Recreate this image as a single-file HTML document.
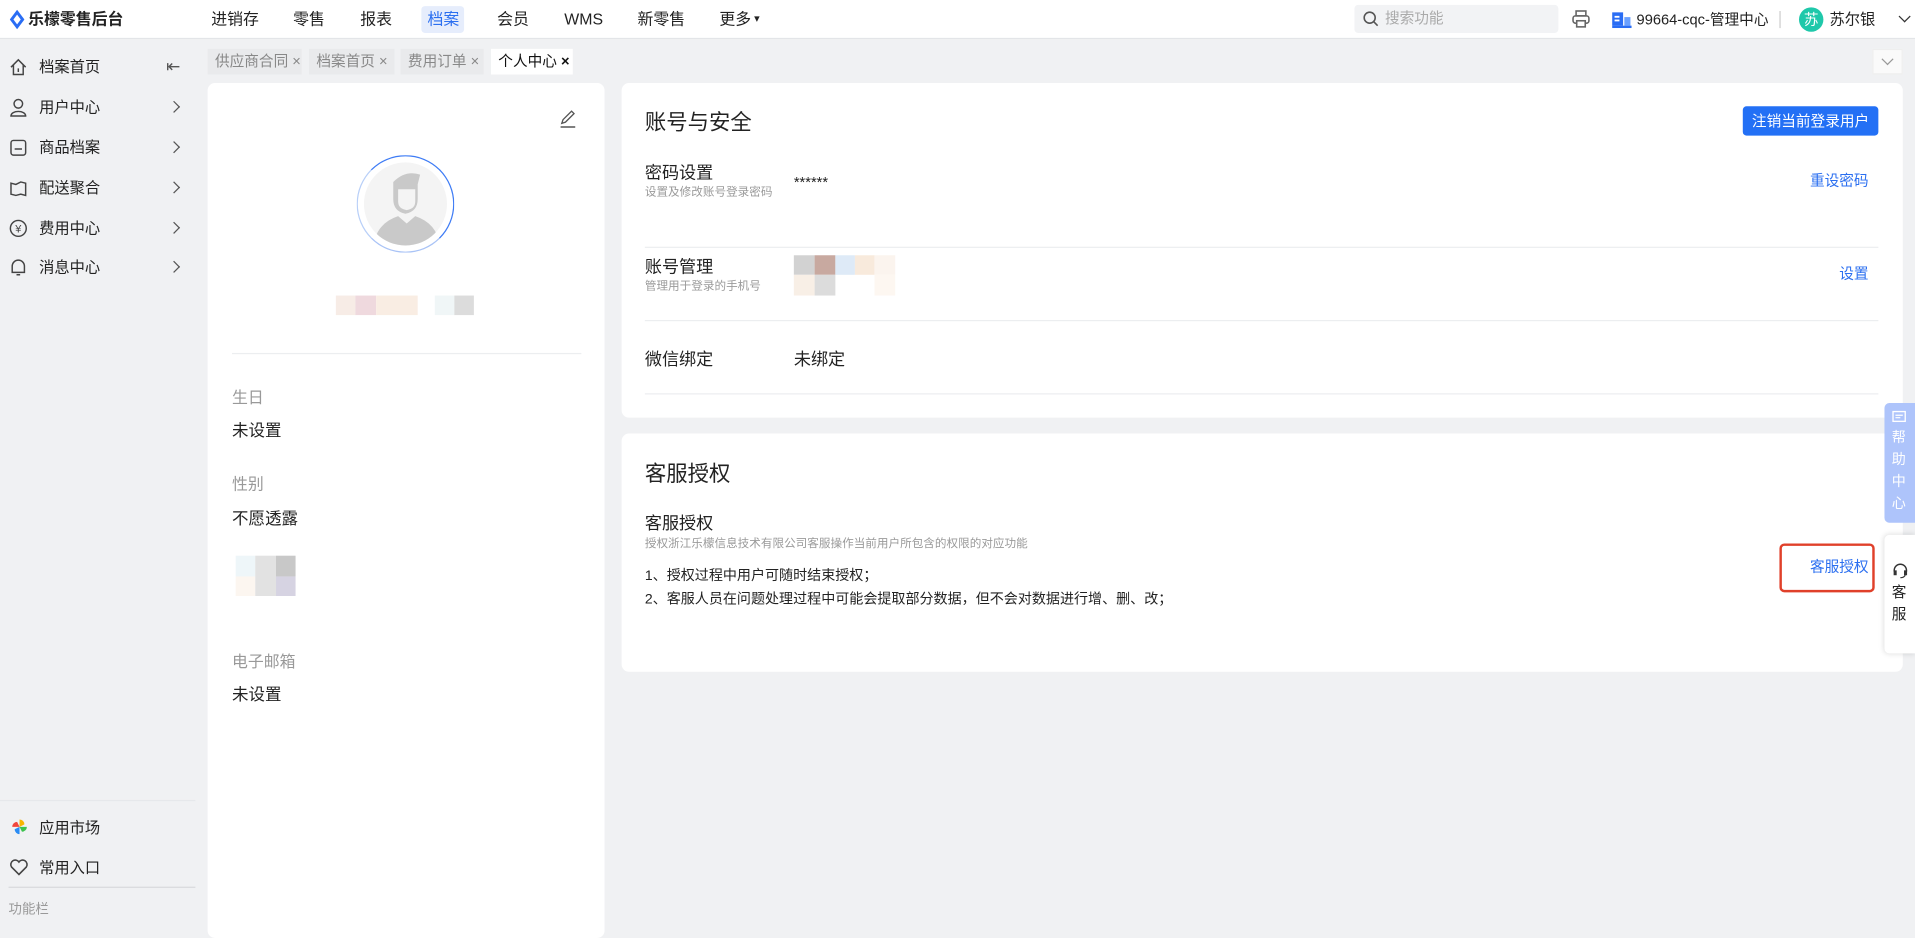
<!DOCTYPE html>
<html><head><meta charset="utf-8"><style>
html,body{margin:0;padding:0;width:1915px;height:929px;overflow:hidden;background:#f0f1f3}
#w{position:absolute;left:0;top:0;width:1568px;height:761px;transform:scale(1.22130);transform-origin:0 0;font-family:"Liberation Sans","Noto Sans CJK SC",sans-serif;color:#222;background:#f0f1f3;line-height:1.15}
.a{position:absolute;white-space:nowrap}
.top{position:absolute;left:0;top:0;width:1568px;height:31px;background:#fff;border-bottom:1px solid #e3e5e8}
.nav{font-size:13px;top:9px;color:#222}
.side{font-size:12.5px;color:#222}
.chev{position:absolute;width:6px;height:6px;border-right:1.3px solid #555;border-top:1.3px solid #555;transform:rotate(45deg)}
.tab{position:absolute;top:40px;height:21px;background:#e9eaec;font-size:12px;color:#888;line-height:21px;padding-left:6px;box-sizing:border-box;white-space:nowrap}
.card{position:absolute;background:#fff;border-radius:6px}
.lbl{font-size:13px;color:#999}
.val{font-size:13.5px;color:#222}
.t14{font-size:14px;color:#222}
.sub{font-size:9.5px;color:#9a9a9a}
.link{font-size:12px;color:#2b6ff0}
.hr{position:absolute;height:1px;background:#eceef0}
</style></head><body><div id="w">
<div class="top"></div>
<svg class="a" style="left:8px;top:8px" width="12" height="16" viewBox="0 0 12 16"><path d="M6 0L12 8 6 16 0 8Z" fill="#2a6df4"/><path d="M6 4L9 8 6 12 3 8Z" fill="#fff"/></svg>
<div class="a" style="left:23px;top:9px;font-size:13px;font-weight:bold">乐檬零售后台</div>
<div class="a" style="left:345px;top:5px;width:35px;height:22px;background:#e6edfc;border-radius:3px"></div>
<div class="a nav" style="left:173px">进销存</div>
<div class="a nav" style="left:240px">零售</div>
<div class="a nav" style="left:295px">报表</div>
<div class="a nav" style="left:350px;color:#2b6ff0">档案</div>
<div class="a nav" style="left:407px">会员</div>
<div class="a nav" style="left:462px">WMS</div>
<div class="a nav" style="left:522px">新零售</div>
<div class="a nav" style="left:589px">更多<span style="font-size:9px;vertical-align:2px"> ▾</span></div>
<div class="a" style="left:1109px;top:4px;width:167px;height:23px;background:#f2f3f5;border-radius:3px"></div>
<svg class="a" style="left:1116px;top:9px" width="13" height="13"><circle cx="5.5" cy="5.5" r="4.5" stroke="#555" stroke-width="1.3" fill="none"/><path d="M9 9L12 12" stroke="#555" stroke-width="1.3"/></svg>
<div class="a" style="left:1134px;top:9px;font-size:12px;color:#aaa">搜索功能</div>
<svg class="a" style="left:1287px;top:8px" width="15" height="15"><rect x="3.5" y="1" width="8" height="4" fill="none" stroke="#666" stroke-width="1.3"/><rect x="1" y="5" width="13" height="6" rx="2" fill="none" stroke="#666" stroke-width="1.3"/><rect x="4" y="9" width="7" height="5" fill="#fff" stroke="#666" stroke-width="1.3"/></svg>
<svg class="a" style="left:1320px;top:10px" width="16" height="13"><rect x="0" y="0" width="9" height="11" fill="#2a6df4"/><rect x="10" y="4" width="5" height="7" fill="#6aa0ff"/><rect x="0" y="11" width="16" height="2" fill="#2a6df4"/><rect x="2" y="3" width="4" height="1.5" fill="#fff"/><rect x="2" y="6" width="4" height="1.5" fill="#fff"/></svg>
<div class="a" style="left:1340px;top:10px;font-size:12px">99664-cqc-管理中心</div>
<div class="a" style="left:1457px;top:9px;width:1px;height:14px;background:#ccc"></div>
<div class="a" style="left:1473px;top:6px;width:20px;height:20px;border-radius:50%;background:#1fc8aa;color:#fff;font-size:12px;text-align:center;line-height:20px">苏</div>
<div class="a" style="left:1498px;top:9px;font-size:12.5px">苏尔银</div>
<div class="chev" style="left:1556px;top:10px;transform:rotate(135deg);border-color:#333"></div>

<svg class="a" style="left:7px;top:47px" width="16" height="16"><path d="M2 8L8 2 14 8M4 6V14H12V6M8 9V12" fill="none" stroke="#444" stroke-width="1.2"/></svg>
<div class="a side" style="left:32px;top:48px">档案首页</div>
<div class="a" style="left:136px;top:46px;font-size:14px;color:#555">⇤</div>
<svg class="a" style="left:7px;top:80px" width="16" height="16"><circle cx="8" cy="5" r="3.5" fill="none" stroke="#444" stroke-width="1.2"/><path d="M2 15C2 10 14 10 14 15Z" fill="none" stroke="#444" stroke-width="1.2"/></svg>
<div class="a side" style="left:32px;top:81px">用户中心</div><div class="chev" style="left:139px;top:84px"></div>
<svg class="a" style="left:7px;top:113px" width="16" height="16"><rect x="2" y="2" width="12" height="12" rx="2" fill="none" stroke="#444" stroke-width="1.2"/><path d="M5 9H11" stroke="#444" stroke-width="1.2"/></svg>
<div class="a side" style="left:32px;top:114px">商品档案</div><div class="chev" style="left:139px;top:117px"></div>
<svg class="a" style="left:7px;top:146px" width="16" height="16"><path d="M2 4L6 5 10 3 14 4V14L10 13 6 14 2 13Z" fill="none" stroke="#444" stroke-width="1.2"/></svg>
<div class="a side" style="left:32px;top:147px">配送聚合</div><div class="chev" style="left:139px;top:150px"></div>
<svg class="a" style="left:7px;top:179px" width="16" height="16"><circle cx="8" cy="8" r="6.5" fill="none" stroke="#444" stroke-width="1.2"/><text x="8" y="11.5" font-size="9" text-anchor="middle" fill="#444">¥</text></svg>
<div class="a side" style="left:32px;top:180px">费用中心</div><div class="chev" style="left:139px;top:183px"></div>
<svg class="a" style="left:7px;top:211px" width="16" height="16"><path d="M3 12V7A5 5 0 0 1 13 7V12H3ZM6.5 14H9.5" fill="none" stroke="#444" stroke-width="1.2"/></svg>
<div class="a side" style="left:32px;top:212px">消息中心</div><div class="chev" style="left:139px;top:215px"></div>
<div class="hr" style="left:0;top:655px;width:160px;background:#e6e8eb"></div>
<svg class="a" style="left:9px;top:670px" width="14" height="14"><path d="M7 7V1A4 4 0 0 1 11 5Z" fill="#f7b500"/><path d="M7 7H13A4 4 0 0 1 9 11Z" fill="#3cc24d"/><path d="M7 7V13A4 4 0 0 1 3 9Z" fill="#2a8cf4"/><path d="M7 7H1A4 4 0 0 1 5 3Z" fill="#f0463c"/></svg>
<div class="a side" style="left:32px;top:671px">应用市场</div>
<svg class="a" style="left:8px;top:703px" width="15" height="14"><path d="M7.5 13L1.5 7A3.3 3.3 0 0 1 7.5 2.8 3.3 3.3 0 0 1 13.5 7Z" fill="none" stroke="#444" stroke-width="1.3"/></svg>
<div class="a side" style="left:32px;top:704px">常用入口</div>
<div class="hr" style="left:7px;top:726px;width:153px;background:#d8d9dc"></div>
<div class="a" style="left:7px;top:739px;font-size:11px;color:#999">功能栏</div>

<div class="tab" style="left:170px;width:77px">供应商合同 ×</div>
<div class="tab" style="left:253px;width:70px">档案首页 ×</div>
<div class="tab" style="left:328px;width:68px">费用订单 ×</div>
<div class="tab" style="left:402px;width:67px;background:#fff;color:#111">个人中心 <b>×</b></div>
<div class="a" style="left:1533px;top:40px;width:25px;height:21px;background:#fafafa;border:1px solid #eee;box-sizing:border-box"></div>
<div class="chev" style="left:1542px;top:45px;transform:rotate(135deg);border-color:#999"></div>

<div class="card" style="left:170px;top:68px;width:325px;height:700px"></div>
<svg class="a" style="left:457px;top:89px" width="16" height="16"><path d="M3 12L4 9 11 2 13 4 6 11Z" fill="none" stroke="#555" stroke-width="1.1"/><path d="M2 15H14" stroke="#555" stroke-width="1.2"/></svg>
<div class="a" style="left:292px;top:127px;width:78px;height:78px;border-radius:50%;border:1.5px solid #3d7bf5;border-left-color:#b8cff8;border-bottom-color:#a9c3f6;background:#fff"></div>
<div class="a" style="left:298px;top:133px;width:68px;height:68px;border-radius:50%;background:#f4f4f4;overflow:hidden">
<svg width="68" height="68"><path d="M24 16Q34 6 46 10L44 18V30Q44 40 34 42 24 40 24 30Z" fill="#c9c9c9"/><path d="M28 22H42V32Q42 38 35 39 28 38 28 32Z" fill="#f4f4f4"/><path d="M8 68Q10 50 28 44L35 50 42 44Q60 50 62 68Z" fill="#c9c9c9"/></svg></div>
<div class="a" style="left:275px;top:242px;width:16px;height:16px;background:#f7ece6"></div>
<div class="a" style="left:291px;top:242px;width:17px;height:16px;background:#efd9de"></div>
<div class="a" style="left:308px;top:242px;width:34px;height:16px;background:#f9ede3"></div>
<div class="a" style="left:356px;top:242px;width:16px;height:16px;background:#f0f6f7"></div>
<div class="a" style="left:372px;top:242px;width:16px;height:16px;background:#dcdcdc"></div>
<div class="hr" style="left:190px;top:289px;width:286px"></div>
<div class="a lbl" style="left:190px;top:319px">生日</div>
<div class="a val" style="left:190px;top:345px">未设置</div>
<div class="a lbl" style="left:190px;top:390px">性别</div>
<div class="a val" style="left:190px;top:417px">不愿透露</div>
<div class="a" style="left:193px;top:455px;width:16px;height:17px;background:#eef6f9"></div>
<div class="a" style="left:193px;top:472px;width:16px;height:16px;background:#fcf6f0"></div>
<div class="a" style="left:209px;top:455px;width:17px;height:33px;background:#e2e2e2"></div>
<div class="a" style="left:226px;top:455px;width:16px;height:17px;background:#c8c8c8"></div>
<div class="a" style="left:226px;top:472px;width:16px;height:16px;background:#d6d3e2"></div>
<div class="a lbl" style="left:190px;top:535px">电子邮箱</div>
<div class="a val" style="left:190px;top:561px">未设置</div>

<div class="card" style="left:509px;top:68px;width:1049px;height:274px"></div>
<div class="a" style="left:528px;top:90px;font-size:17.5px">账号与安全</div>
<div class="a" style="left:1427px;top:87px;width:111px;height:24px;background:#2370f5;border-radius:3px;color:#fff;font-size:12px;text-align:center;line-height:24px">注销当前登录用户</div>
<div class="a t14" style="left:528px;top:133px">密码设置</div>
<div class="a sub" style="left:528px;top:153px">设置及修改账号登录密码</div>
<div class="a" style="left:650px;top:143px;font-size:12px">******</div>
<div class="a link" style="left:1482px;top:142px">重设密码</div>
<div class="hr" style="left:528px;top:202px;width:1010px"></div>
<div class="a t14" style="left:528px;top:210px">账号管理</div>
<div class="a sub" style="left:528px;top:230px">管理用于登录的手机号</div>
<div class="a" style="left:650px;top:209px;width:17px;height:16px;background:#d2d2d2"></div>
<div class="a" style="left:667px;top:209px;width:17px;height:16px;background:#c8a9a0"></div>
<div class="a" style="left:684px;top:209px;width:16px;height:16px;background:#deeaf7"></div>
<div class="a" style="left:700px;top:209px;width:16px;height:16px;background:#f8eadc"></div>
<div class="a" style="left:716px;top:209px;width:17px;height:16px;background:#fbf4ee"></div>
<div class="a" style="left:650px;top:225px;width:17px;height:17px;background:#f8efe6"></div>
<div class="a" style="left:667px;top:225px;width:17px;height:17px;background:#dcdcdc"></div>
<div class="a" style="left:716px;top:225px;width:17px;height:17px;background:#fdf7f1"></div>
<div class="a link" style="left:1506px;top:218px">设置</div>
<div class="hr" style="left:528px;top:262px;width:1010px"></div>
<div class="a t14" style="left:528px;top:286px">微信绑定</div>
<div class="a t14" style="left:650px;top:286px">未绑定</div>
<div class="hr" style="left:528px;top:322px;width:1010px"></div>

<div class="card" style="left:509px;top:355px;width:1049px;height:195px"></div>
<div class="a" style="left:528px;top:378px;font-size:17.5px">客服授权</div>
<div class="a t14" style="left:528px;top:420px">客服授权</div>
<div class="a sub" style="left:528px;top:441px">授权浙江乐檬信息技术有限公司客服操作当前用户所包含的权限的对应功能</div>
<div class="a" style="left:528px;top:466px;font-size:11.5px">1、授权过程中用户可随时结束授权；</div>
<div class="a" style="left:528px;top:485px;font-size:11.5px">2、客服人员在问题处理过程中可能会提取部分数据，但不会对数据进行增、删、改；</div>
<div class="a" style="left:1457px;top:445px;width:78px;height:40px;border:2px solid #e0402a;border-radius:4px;box-sizing:border-box"></div>
<div class="a link" style="left:1482px;top:458px">客服授权</div>

<div class="a" style="left:1543px;top:330px;width:25px;height:98px;background:#aec4fb;border-radius:4px 0 0 4px"></div>
<svg class="a" style="left:1549px;top:336px" width="12" height="11"><rect x="1" y="1" width="10" height="8" fill="none" stroke="#fff" stroke-width="1.1"/><path d="M3 4H9M3 6H7" stroke="#fff"/></svg>
<div class="a" style="left:1549px;top:350px;width:13px;font-size:11.5px;color:#fff;line-height:18px;white-space:normal">帮助中心</div>
<div class="a" style="left:1543px;top:438px;width:25px;height:97px;background:#fff;border-radius:4px 0 0 4px;box-shadow:0 0 5px rgba(0,0,0,.15)"></div>
<svg class="a" style="left:1549px;top:460px" width="14" height="14"><path d="M2 8V7A5 5 0 0 1 12 7V8" fill="none" stroke="#333" stroke-width="1.2"/><rect x="1.5" y="7" width="2.5" height="4" fill="#333"/><rect x="10" y="7" width="2.5" height="4" fill="#333"/><path d="M11 11Q10 13 7 13" fill="none" stroke="#333"/></svg>
<div class="a" style="left:1549px;top:476px;width:13px;font-size:12px;color:#222;line-height:18px;white-space:normal">客服</div>
</div></body></html>
